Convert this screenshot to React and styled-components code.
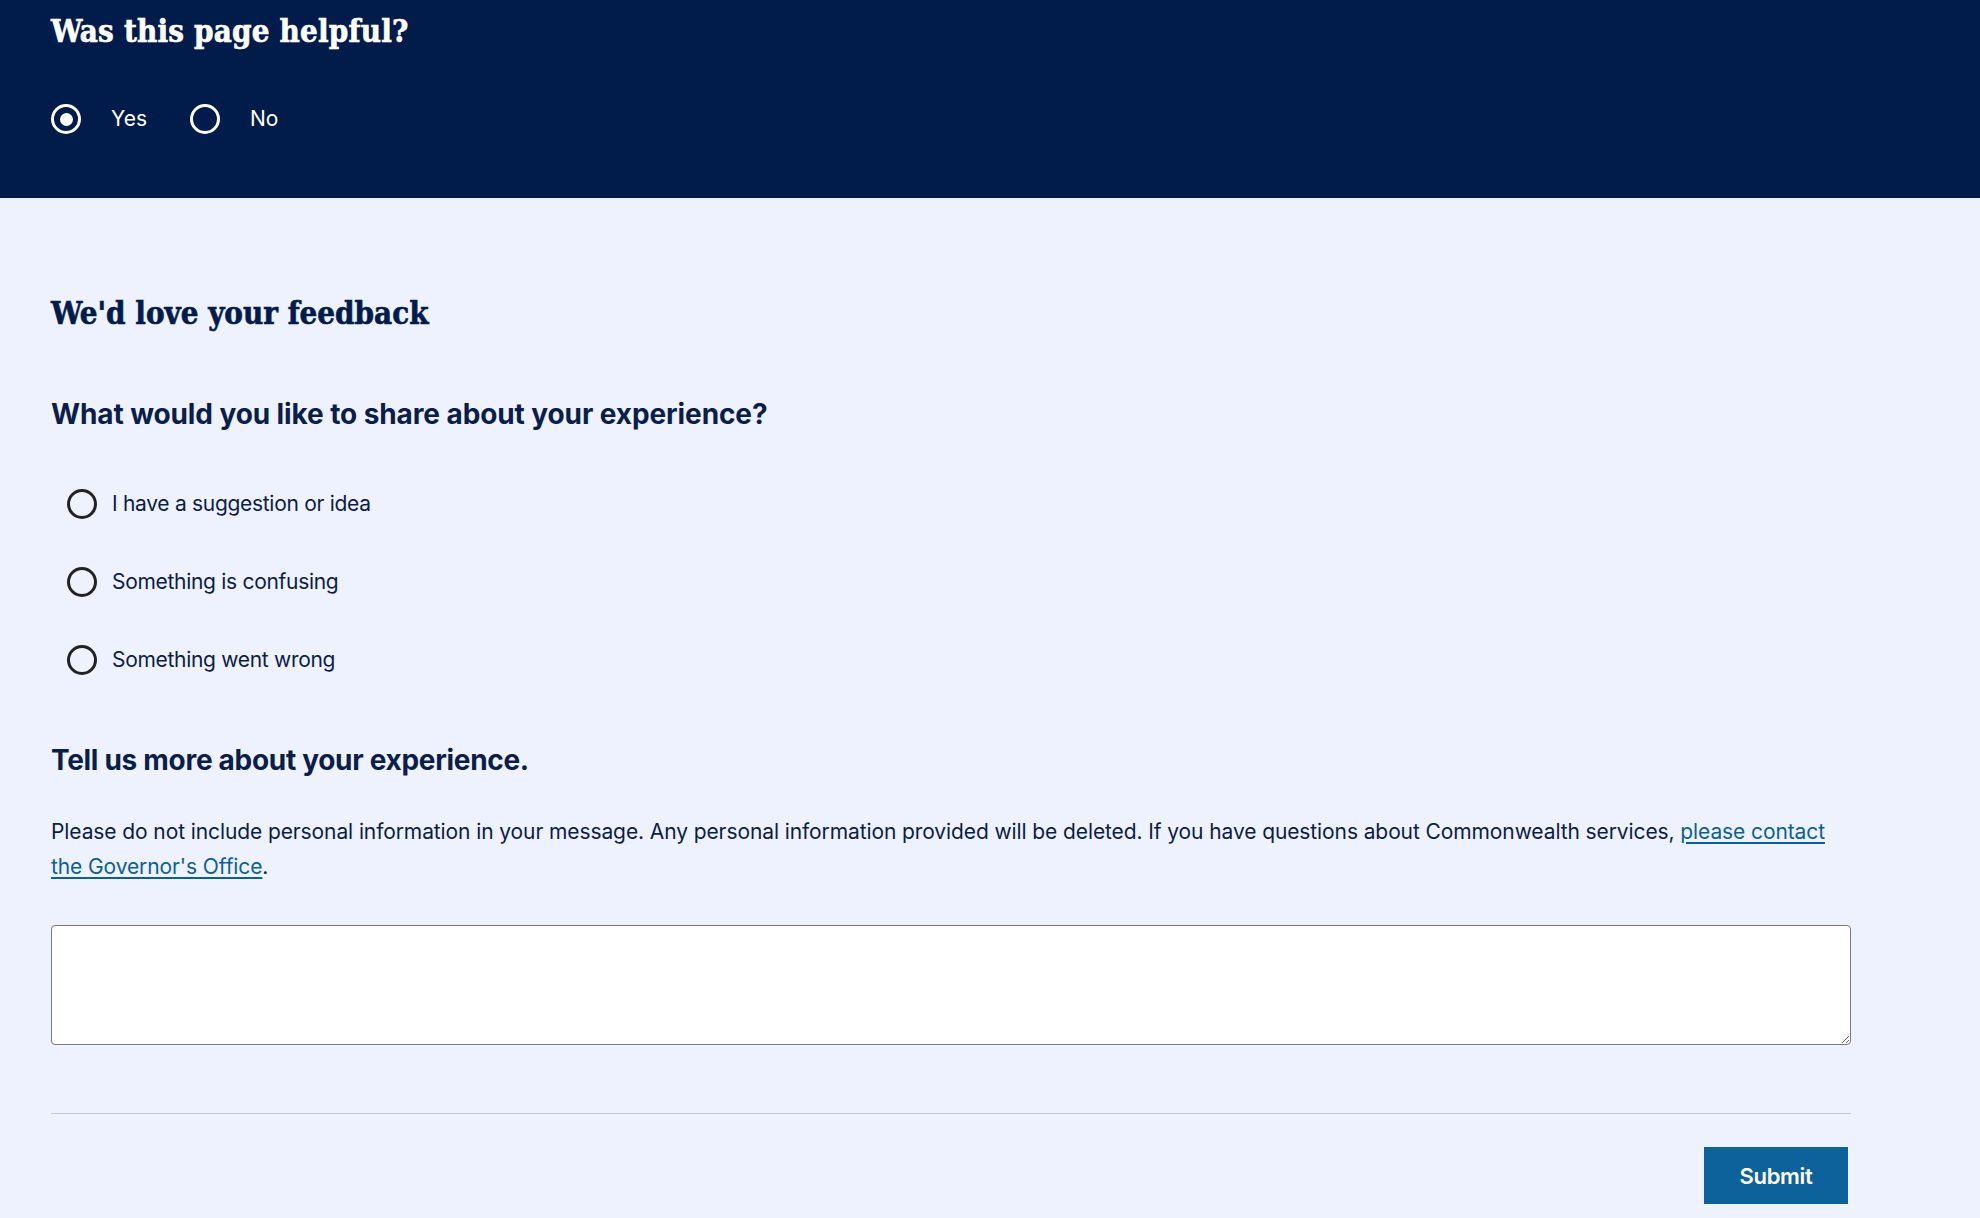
import React from "react";
import styled, { createGlobalStyle } from "styled-components";

const GlobalStyle = createGlobalStyle`
  html, body {
    margin: 0;
    padding: 0;
    background: #eef1fe;
  }
  body {
    font-family: "Inter", "Noto Sans", sans-serif;
    color: #0b1d49;
  }
  * { box-sizing: border-box; }
`;

const HelpfulBar = styled.section`
  background: #011b4b;
  height: 198px;
  padding: 11px 51px 0;
`;

const SlabTitle = styled.h2`
  margin: 0;
  font-family: "DejaVu Serif Condensed", "DejaVu Serif", serif;
  font-weight: 700;
  font-size: 31px;
  line-height: 40px;
  letter-spacing: ${(p) => p.$spacing}px;
  color: ${(p) => (p.$tone === "light" ? "#ffffff" : "#011b4b")};
  -webkit-text-stroke: 0.6px ${(p) => (p.$tone === "light" ? "#ffffff" : "#011b4b")};
`;

const ChoiceRow = styled.div`
  display: flex;
  align-items: center;
  margin-top: 53px;
`;

const Choice = styled.label`
  display: flex;
  align-items: center;
  gap: 30px;
  margin-right: 43px;
  font-size: 21px;
  line-height: 30px;
  color: #ffffff;
  cursor: pointer;
`;

const RadioInput = styled.input.attrs({ type: "radio" })`
  appearance: none;
  -webkit-appearance: none;
  margin: 0;
  width: 30px;
  height: 30px;
  flex: 0 0 30px;
  border-radius: 50%;
  border: 3px solid ${(p) => (p.$tone === "light" ? "#ffffff" : "#222222")};
  background: transparent;
  display: grid;
  place-items: center;
  &:checked::after {
    content: "";
    width: 13px;
    height: 13px;
    border-radius: 50%;
    background: ${(p) => (p.$tone === "light" ? "#ffffff" : "#222222")};
  }
`;

const FeedbackPanel = styled.section`
  background: #eef1fe;
  padding: 95px 51px 14px;
`;

const Inner = styled.form`
  width: 1800px;
  display: flex;
  flex-direction: column;
`;

const Question = styled.h3`
  margin: ${(p) => p.$top}px 0 0;
  font-family: "Inter", sans-serif;
  font-weight: 700;
  font-size: 28px;
  line-height: 36px;
  letter-spacing: ${(p) => p.$spacing}px;
  color: #0b1d49;
`;

const OptionList = styled.div`
  display: flex;
  flex-direction: column;
  gap: 48px;
  margin-top: 57px;
  padding-left: 16px;
`;

const OptionLabel = styled.label`
  display: flex;
  align-items: center;
  gap: 15px;
  font-size: 21px;
  line-height: 30px;
  letter-spacing: -0.3px;
  color: #0b1d49;
  cursor: pointer;
`;

const Note = styled.p`
  margin: 36px 0 0;
  font-size: 21px;
  line-height: 35px;
  letter-spacing: -0.1px;
  color: #0b1d49;
`;

const NoteLink = styled.a`
  color: #0b5f98;
  text-decoration: underline;
  text-underline-offset: 3px;
  text-decoration-thickness: 1.5px;
`;

const MessageBox = styled.textarea`
  margin-top: 41px;
  width: 100%;
  height: 120px;
  background: #ffffff;
  border: 1.5px solid #7a7a7a;
  border-radius: 4px;
  font-family: "Inter", sans-serif;
  font-size: 20px;
  padding: 10px 14px;
  resize: vertical;
`;

const Divider = styled.hr`
  margin: 68px 0 0;
  border: 0;
  height: 1px;
  background: #c3c7d3;
`;

const Actions = styled.div`
  display: flex;
  justify-content: flex-end;
  margin-top: 33px;
  padding-right: 3px;
`;

const SubmitButton = styled.button`
  width: 144px;
  height: 57px;
  border: 0;
  background: #0d629c;
  color: #ffffff;
  font-family: "Inter", sans-serif;
  font-weight: 600;
  font-size: 22px;
  letter-spacing: -0.3px;
  cursor: pointer;
`;

const options = [
  "I have a suggestion or idea",
  "Something is confusing",
  "Something went wrong",
];

export default function App() {
  return (
    <>
      <GlobalStyle />
      <HelpfulBar>
        <SlabTitle $tone="light" $spacing={0.2}>Was this page helpful?</SlabTitle>
        <ChoiceRow>
          <Choice>
            <RadioInput $tone="light" name="helpful" defaultChecked />
            Yes
          </Choice>
          <Choice>
            <RadioInput $tone="light" name="helpful" />
            No
          </Choice>
        </ChoiceRow>
      </HelpfulBar>
      <FeedbackPanel>
        <Inner onSubmit={(e) => e.preventDefault()}>
          <SlabTitle $spacing={0}>We'd love your feedback</SlabTitle>
          <Question $top={63} $spacing={-0.1}>
            What would you like to share about your experience?
          </Question>
          <OptionList>
            {options.map((o) => (
              <OptionLabel key={o}>
                <RadioInput name="kind" />
                {o}
              </OptionLabel>
            ))}
          </OptionList>
          <Question $top={67} $spacing={-0.3}>
            Tell us more about your experience.
          </Question>
          <Note>
            Please do not include personal information in your message. Any personal
            information provided will be deleted. If you have questions about Commonwealth
            services, <NoteLink href="#">please contact the Governor's Office</NoteLink>.
          </Note>
          <MessageBox aria-label="Tell us more about your experience." />
          <Divider />
          <Actions>
            <SubmitButton type="submit">Submit</SubmitButton>
          </Actions>
        </Inner>
      </FeedbackPanel>
    </>
  );
}
